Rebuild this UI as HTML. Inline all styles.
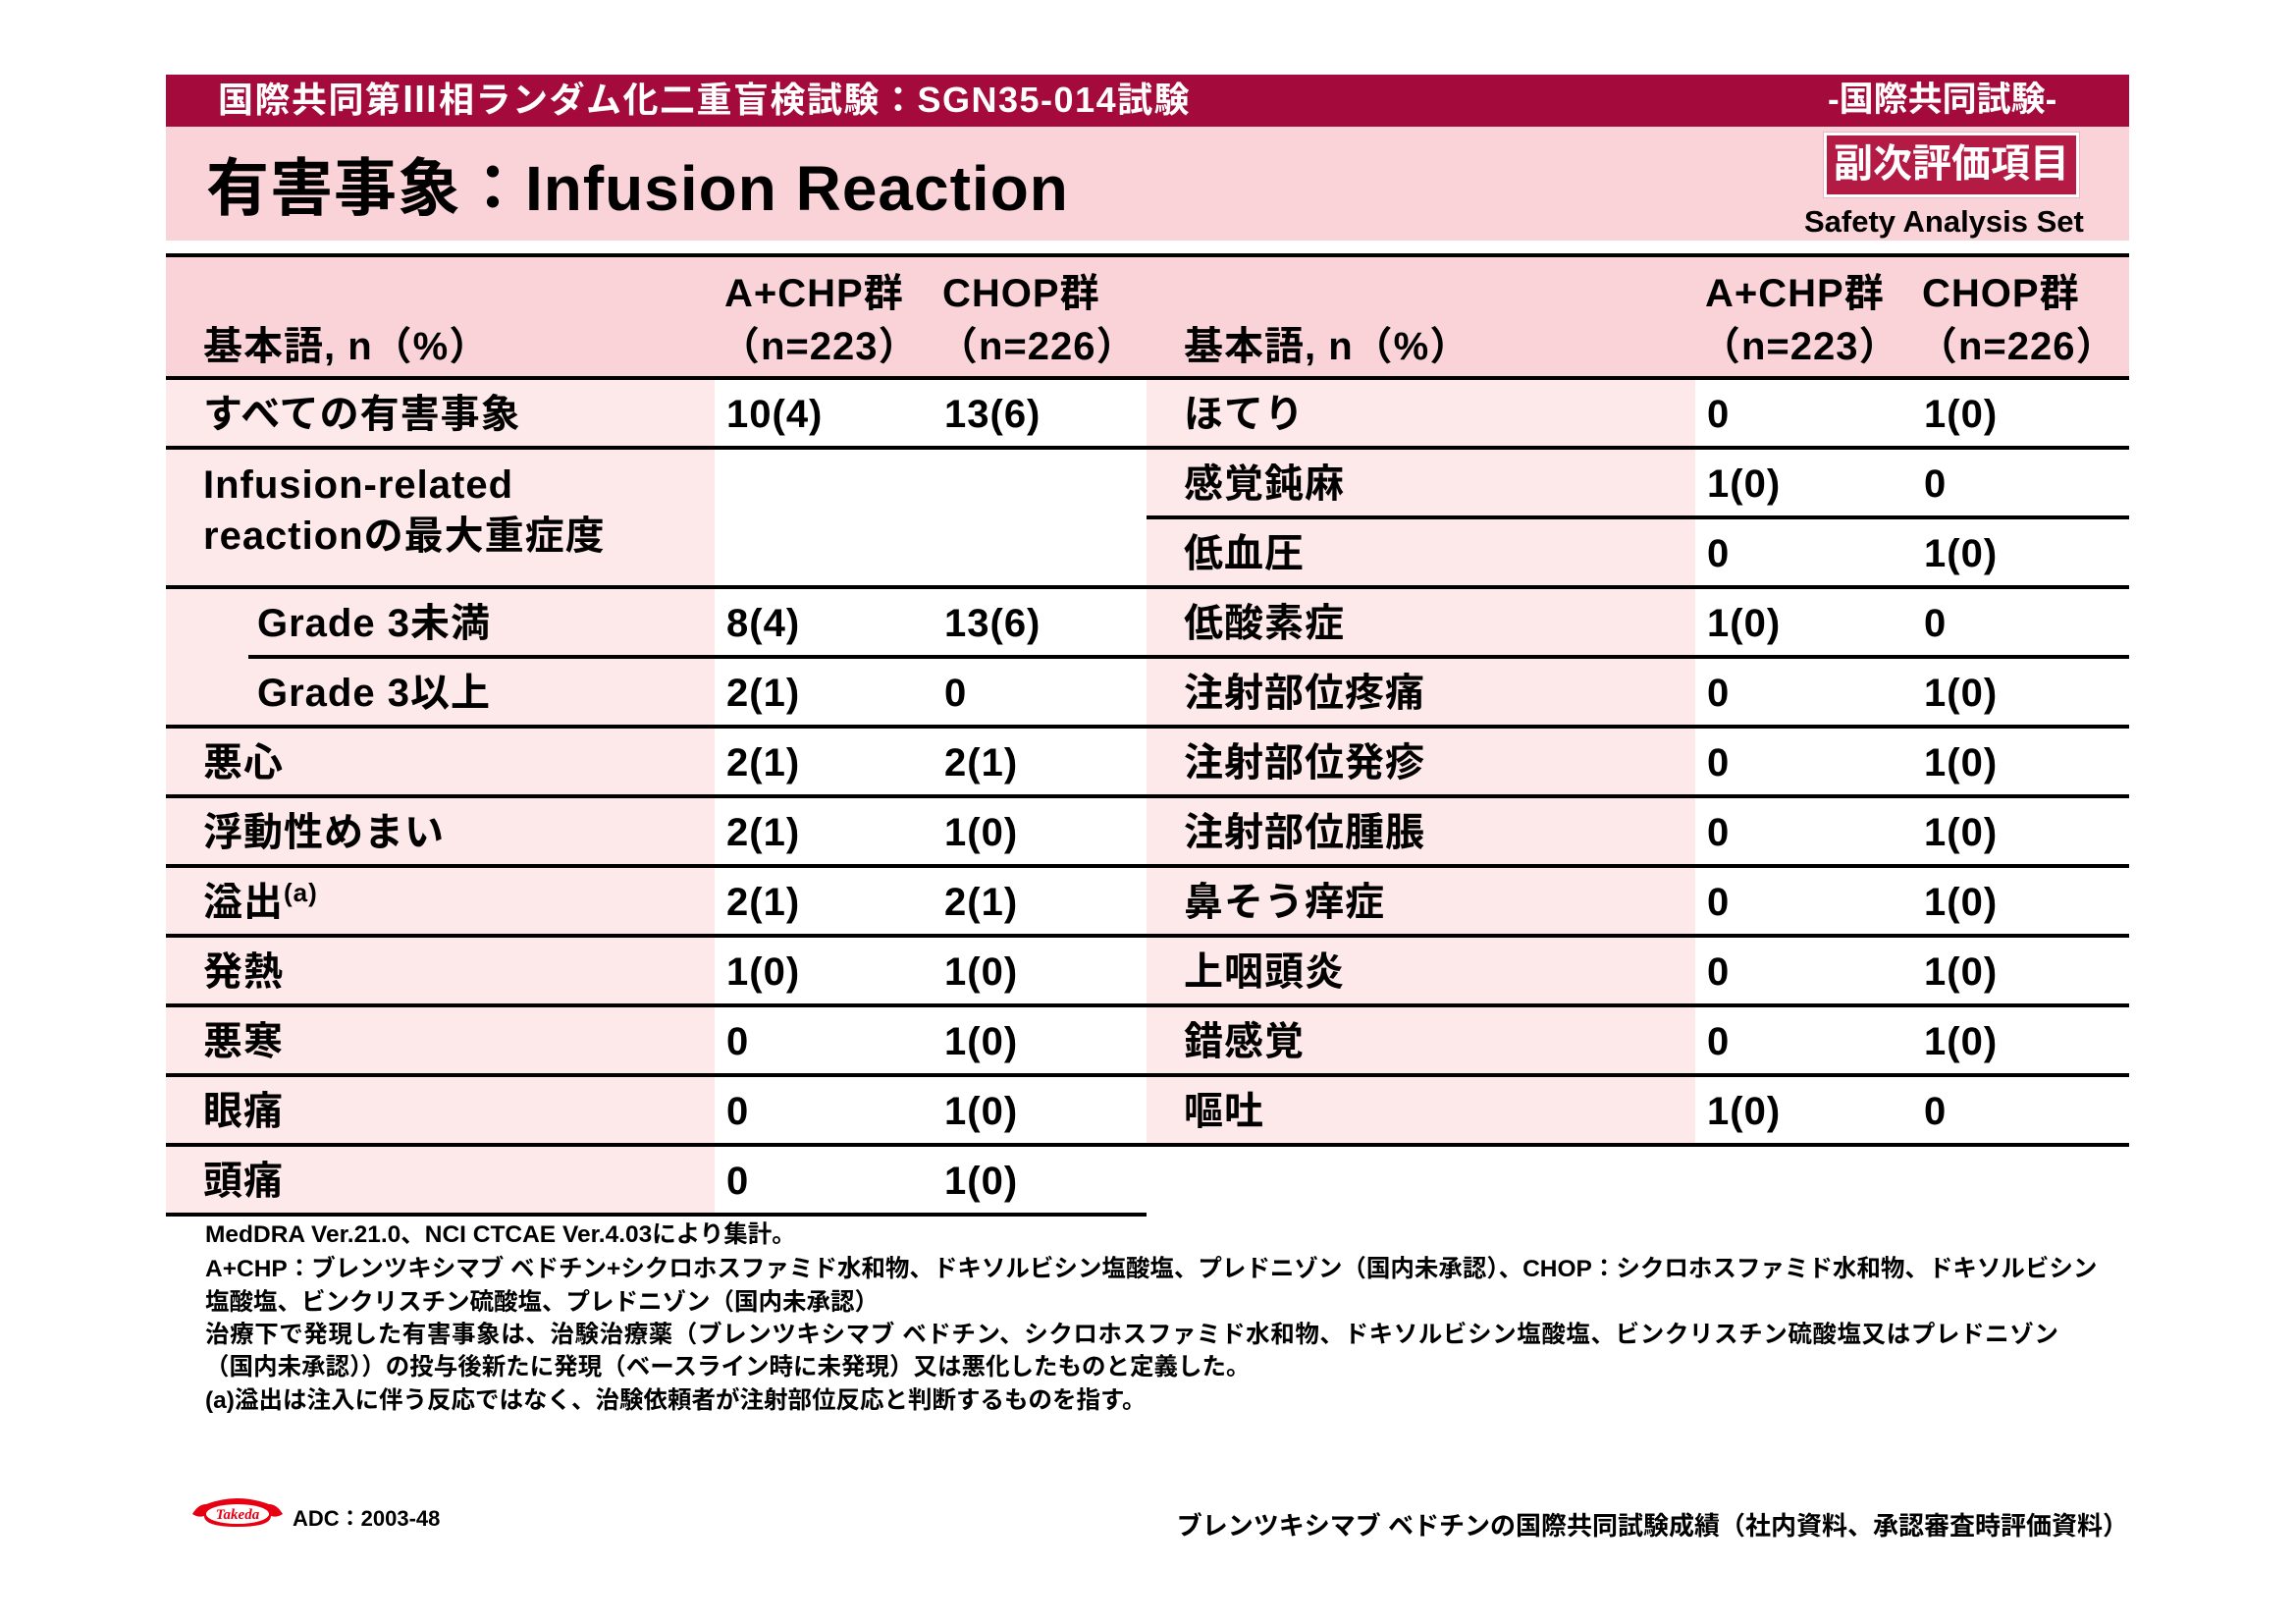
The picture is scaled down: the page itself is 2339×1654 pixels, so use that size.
<!DOCTYPE html>
<html><head><meta charset="utf-8">
<style>
*{margin:0;padding:0;box-sizing:border-box}
body{width:2339px;height:1654px;background:#fff;position:relative;overflow:hidden;font-family:"Liberation Sans","Noto Sans CJK JP",sans-serif;color:#000}
.a{position:absolute;white-space:nowrap}
.band{left:169px;top:76px;width:2000px;height:53px;background:#a50a3c}
.hdr{left:169px;top:129px;width:2000px;height:116px;background:#f9d3d8}
.thead{left:169px;top:260px;width:2000px;height:125px;background:#f9d3d8}
.lab{background:#fde8ea}
.ln{position:absolute;height:4px;background:#000}
.t{position:absolute;white-space:nowrap;font-size:40px;font-weight:bold;line-height:71px;letter-spacing:1px}
.fn{position:absolute;left:209px;white-space:nowrap;font-size:24.5px;font-weight:bold;line-height:34px}
</style></head><body>
<div class="a band"></div>
<div class="a hdr"></div>
<div class="a" style="left:222px;top:82px;font-size:36px;font-weight:bold;color:#fff;line-height:40px;letter-spacing:1.5px">国際共同第Ⅲ相ランダム化二重盲検試験：SGN35-014試験</div>
<div class="a" style="left:1862px;top:82px;font-size:35px;font-weight:bold;color:#fff;line-height:40px">-国際共同試験-</div>
<div class="a" style="left:210px;top:157px;font-size:64px;font-weight:bold;line-height:70px;letter-spacing:1px">有害事象：Infusion Reaction</div>
<div class="a" style="left:1858px;top:135px;width:260px;height:66px;background:#b31a44;border:3px solid #fff;box-shadow:0 0 0 1px #e9b7c3;color:#fff;font-size:40px;font-weight:bold;text-align:center;line-height:58px">副次評価項目</div>
<div class="a" style="left:1838px;top:208px;font-size:31px;font-weight:bold;line-height:36px">Safety Analysis Set</div>

<div class="a thead"></div>
<div class="a lab" style="left:169px;top:385px;width:559px;height:852px"></div>
<div class="a lab" style="left:1168px;top:385px;width:559px;height:781px"></div>

<div class="ln" style="left:169px;top:258px;width:2000px"></div>
<div class="ln" style="left:169px;top:383px;width:2000px"></div>
<div class="ln" style="left:169px;top:454px;width:999px"></div>
<div class="ln" style="left:169px;top:596px;width:999px"></div>
<div class="ln" style="left:253px;top:667px;width:915px"></div>
<div class="ln" style="left:169px;top:738px;width:999px"></div>
<div class="ln" style="left:169px;top:809px;width:999px"></div>
<div class="ln" style="left:169px;top:880px;width:999px"></div>
<div class="ln" style="left:169px;top:951px;width:999px"></div>
<div class="ln" style="left:169px;top:1022px;width:999px"></div>
<div class="ln" style="left:169px;top:1093px;width:999px"></div>
<div class="ln" style="left:169px;top:1164px;width:999px"></div>
<div class="ln" style="left:169px;top:1235px;width:999px"></div>

<div class="ln" style="left:1168px;top:454px;width:1001px"></div>
<div class="ln" style="left:1168px;top:525px;width:1001px"></div>
<div class="ln" style="left:1168px;top:596px;width:1001px"></div>
<div class="ln" style="left:1168px;top:667px;width:1001px"></div>
<div class="ln" style="left:1168px;top:738px;width:1001px"></div>
<div class="ln" style="left:1168px;top:809px;width:1001px"></div>
<div class="ln" style="left:1168px;top:880px;width:1001px"></div>
<div class="ln" style="left:1168px;top:951px;width:1001px"></div>
<div class="ln" style="left:1168px;top:1022px;width:1001px"></div>
<div class="ln" style="left:1168px;top:1093px;width:1001px"></div>
<div class="ln" style="left:1168px;top:1164px;width:1001px"></div>

<div class="t" style="left:738px;top:264px">A+CHP群</div>
<div class="t" style="left:960px;top:264px">CHOP群</div>
<div class="t" style="left:734px;top:318px">（n=223）</div>
<div class="t" style="left:956px;top:318px">（n=226）</div>
<div class="t" style="left:207px;top:318px">基本語, n（%）</div>
<div class="t" style="left:1737px;top:264px">A+CHP群</div>
<div class="t" style="left:1958px;top:264px">CHOP群</div>
<div class="t" style="left:1733px;top:318px">（n=223）</div>
<div class="t" style="left:1954px;top:318px">（n=226）</div>
<div class="t" style="left:1206px;top:318px">基本語, n（%）</div>

<div class="t" style="left:207px;top:387px">すべての有害事象</div><div class="t" style="left:740px;top:387px">10(4)</div><div class="t" style="left:962px;top:387px">13(6)</div>
<div class="t" style="left:207px;top:468px;line-height:52px">Infusion-related<br>reactionの最大重症度</div>
<div class="t" style="left:262px;top:600px">Grade 3未満</div><div class="t" style="left:740px;top:600px">8(4)</div><div class="t" style="left:962px;top:600px">13(6)</div>
<div class="t" style="left:262px;top:671px">Grade 3以上</div><div class="t" style="left:740px;top:671px">2(1)</div><div class="t" style="left:962px;top:671px">0</div>
<div class="t" style="left:207px;top:742px">悪心</div><div class="t" style="left:740px;top:742px">2(1)</div><div class="t" style="left:962px;top:742px">2(1)</div>
<div class="t" style="left:207px;top:813px">浮動性めまい</div><div class="t" style="left:740px;top:813px">2(1)</div><div class="t" style="left:962px;top:813px">1(0)</div>
<div class="t" style="left:207px;top:884px">溢出<span style="font-size:26px;position:relative;top:-14px">(a)</span></div><div class="t" style="left:740px;top:884px">2(1)</div><div class="t" style="left:962px;top:884px">2(1)</div>
<div class="t" style="left:207px;top:955px">発熱</div><div class="t" style="left:740px;top:955px">1(0)</div><div class="t" style="left:962px;top:955px">1(0)</div>
<div class="t" style="left:207px;top:1026px">悪寒</div><div class="t" style="left:740px;top:1026px">0</div><div class="t" style="left:962px;top:1026px">1(0)</div>
<div class="t" style="left:207px;top:1097px">眼痛</div><div class="t" style="left:740px;top:1097px">0</div><div class="t" style="left:962px;top:1097px">1(0)</div>
<div class="t" style="left:207px;top:1168px">頭痛</div><div class="t" style="left:740px;top:1168px">0</div><div class="t" style="left:962px;top:1168px">1(0)</div>

<div class="t" style="left:1206px;top:387px">ほてり</div><div class="t" style="left:1739px;top:387px">0</div><div class="t" style="left:1960px;top:387px">1(0)</div>
<div class="t" style="left:1206px;top:458px">感覚鈍麻</div><div class="t" style="left:1739px;top:458px">1(0)</div><div class="t" style="left:1960px;top:458px">0</div>
<div class="t" style="left:1206px;top:529px">低血圧</div><div class="t" style="left:1739px;top:529px">0</div><div class="t" style="left:1960px;top:529px">1(0)</div>
<div class="t" style="left:1206px;top:600px">低酸素症</div><div class="t" style="left:1739px;top:600px">1(0)</div><div class="t" style="left:1960px;top:600px">0</div>
<div class="t" style="left:1206px;top:671px">注射部位疼痛</div><div class="t" style="left:1739px;top:671px">0</div><div class="t" style="left:1960px;top:671px">1(0)</div>
<div class="t" style="left:1206px;top:742px">注射部位発疹</div><div class="t" style="left:1739px;top:742px">0</div><div class="t" style="left:1960px;top:742px">1(0)</div>
<div class="t" style="left:1206px;top:813px">注射部位腫脹</div><div class="t" style="left:1739px;top:813px">0</div><div class="t" style="left:1960px;top:813px">1(0)</div>
<div class="t" style="left:1206px;top:884px">鼻そう痒症</div><div class="t" style="left:1739px;top:884px">0</div><div class="t" style="left:1960px;top:884px">1(0)</div>
<div class="t" style="left:1206px;top:955px">上咽頭炎</div><div class="t" style="left:1739px;top:955px">0</div><div class="t" style="left:1960px;top:955px">1(0)</div>
<div class="t" style="left:1206px;top:1026px">錯感覚</div><div class="t" style="left:1739px;top:1026px">0</div><div class="t" style="left:1960px;top:1026px">1(0)</div>
<div class="t" style="left:1206px;top:1097px">嘔吐</div><div class="t" style="left:1739px;top:1097px">1(0)</div><div class="t" style="left:1960px;top:1097px">0</div>

<div class="fn" style="top:1241px">MedDRA Ver.21.0、NCI CTCAE Ver.4.03により集計。</div>
<div class="fn" style="top:1276px">A+CHP：ブレンツキシマブ ベドチン+シクロホスファミド水和物、ドキソルビシン塩酸塩、プレドニゾン（国内未承認）、CHOP：シクロホスファミド水和物、ドキソルビシン</div>
<div class="fn" style="top:1310px">塩酸塩、ビンクリスチン硫酸塩、プレドニゾン（国内未承認）</div>
<div class="fn" style="top:1343px;letter-spacing:0.6px">治療下で発現した有害事象は、治験治療薬（ブレンツキシマブ ベドチン、シクロホスファミド水和物、ドキソルビシン塩酸塩、ビンクリスチン硫酸塩又はプレドニゾン</div>
<div class="fn" style="top:1376px">（国内未承認））の投与後新たに発現（ベースライン時に未発現）又は悪化したものと定義した。</div>
<div class="fn" style="top:1410px">(a)溢出は注入に伴う反応ではなく、治験依頼者が注射部位反応と判断するものを指す。</div>

<svg class="a" style="left:192px;top:1522px" width="100" height="36" viewBox="0 0 100 36">
<path d="M4 20 Q10 10 18 10 Q50 -2 82 10 Q90 10 96 20 Q90 24 84 22 Q84 33 50 33 Q16 33 16 22 Q10 24 4 20Z" fill="#e60012"/>
<ellipse cx="50" cy="20" rx="32" ry="10" fill="#fff"/>
<text x="50" y="25" font-family="Liberation Serif" font-style="italic" font-weight="bold" font-size="15" fill="#e60012" text-anchor="middle">Takeda</text>
</svg>
<div class="a" style="left:298px;top:1535px;font-size:22px;font-weight:bold;line-height:24px">ADC：2003-48</div>
<div class="a" style="left:1110px;top:1539px;font-size:26px;font-weight:bold;line-height:30px;width:1058px;text-align:right">ブレンツキシマブ ベドチンの国際共同試験成績（社内資料、承認審査時評価資料）</div>
</body></html>
